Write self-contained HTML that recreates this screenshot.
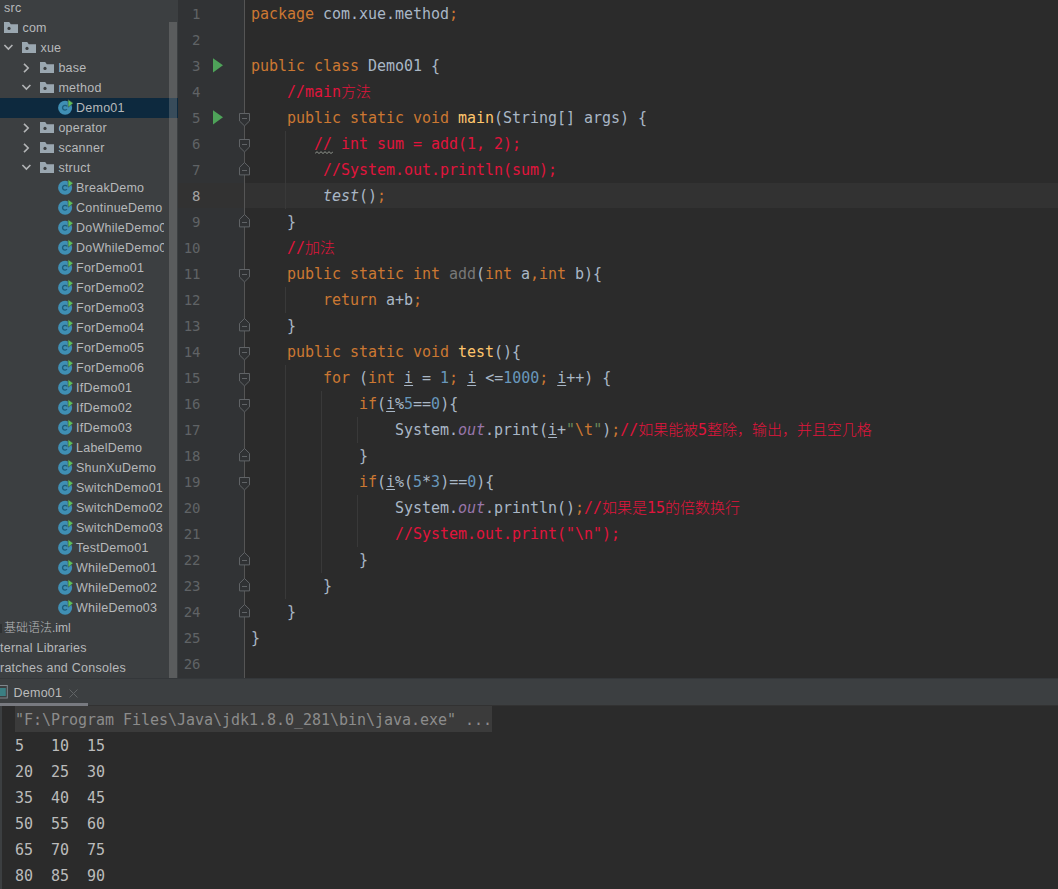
<!DOCTYPE html>
<html lang="zh"><head><meta charset="utf-8"><title>Demo01</title>
<style>
*{margin:0;padding:0;box-sizing:border-box}
html,body{width:1058px;height:889px;overflow:hidden;background:#2b2b2b}
body{position:relative;font-family:"Liberation Sans", "Noto Sans CJK SC", sans-serif;}
#proj{position:absolute;left:0;top:0;width:178px;height:678px;background:#3c3f41;overflow:hidden}
#sel{position:absolute;left:0;top:98px;width:178px;height:20px;background:#0d293e}
#tree{position:absolute;left:0;top:-2px;width:164px;height:680px;overflow:hidden}
.row{position:absolute;left:0;width:178px;height:20px;line-height:20px;font-size:12.5px;letter-spacing:0.25px;color:#b7b9bb;white-space:nowrap}
.row span.t{position:absolute;top:0}
.row svg{position:absolute}
#sb{position:absolute;left:169px;top:21.5px;width:8px;height:656.5px;background:rgba(170,170,170,0.28)}
#gut{position:absolute;left:178px;top:0;width:66px;height:678px;background:#313335}
#gsep{position:absolute;left:244px;top:0;width:1px;height:678px;background:#555555}
#ed{position:absolute;left:245px;top:0;width:813px;height:678px;background:#2b2b2b;overflow:hidden}
#cur{position:absolute;left:178px;top:183px;width:880px;height:25px;background:#323232}
.ln{position:absolute;left:176px;width:24.5px;text-align:right;height:26px;line-height:26.6px;font-family:"DejaVu Sans Mono", "Liberation Mono", "Noto Sans CJK SC", monospace;font-size:14px;color:#606366}
.ln.c{color:#a4a3a3}
.cl{position:absolute;left:251px;letter-spacing:-0.03px;height:26px;line-height:26px;font-family:"DejaVu Sans Mono", "Liberation Mono", "Noto Sans CJK SC", monospace;font-size:15px;color:#a9b7c6;white-space:pre}
.k{color:#cc7832}.c{color:#e0143c}.m{color:#ffc66d}.n{color:#6897bb}.s{color:#6a8759}.f{color:#9876aa;font-style:italic}.g{color:#787878}.i{font-style:italic}
.u{text-decoration:underline;text-underline-offset:2px}
.z{font-weight:300}
.ig{position:absolute;width:1px;background:#393939}
#tabs{position:absolute;left:0;top:678px;width:1058px;height:28px;background:#3c3f41}
#con{position:absolute;left:0;top:706px;width:1058px;height:183px;background:#2b2b2b;overflow:hidden}
.co{position:absolute;left:15px;letter-spacing:-0.03px;height:26px;line-height:26px;font-family:"DejaVu Sans Mono", "Liberation Mono", "Noto Sans CJK SC", monospace;font-size:15px;color:#bbbbbb;white-space:pre}
</style></head><body>
<div id="proj"><div id="sel"></div><div id="tree"><div class="row" style="top:0px"><span class="t" style="left:4px">src</span></div><div class="row" style="top:20px"><svg style="left:4px;top:4px" width="14" height="11" viewBox="0 0 14 11"><path d="M0 0h5.2l1.6 2.2H14V11H0z" fill="#9aa7b0"/><circle cx="5" cy="6.4" r="1.6" fill="#3c3f41"/></svg><span class="t" style="left:22.4px">com</span></div><div class="row" style="top:40px"><svg style="left:3px;top:5px" width="11" height="10" viewBox="0 0 11 10"><path d="M1.4 2 L5.4 6.1 L9.4 2" fill="none" stroke="#b2b4b6" stroke-width="1.6"/></svg><svg style="left:22px;top:4px" width="14" height="11" viewBox="0 0 14 11"><path d="M0 0h5.2l1.6 2.2H14V11H0z" fill="#9aa7b0"/><circle cx="5" cy="6.4" r="1.6" fill="#3c3f41"/></svg><span class="t" style="left:40.4px">xue</span></div><div class="row" style="top:60px"><svg style="left:21px;top:5px" width="11" height="10" viewBox="0 0 11 10"><path d="M3 0.9 L7.2 5 L3 9.1" fill="none" stroke="#b2b4b6" stroke-width="1.6"/></svg><svg style="left:40px;top:4px" width="14" height="11" viewBox="0 0 14 11"><path d="M0 0h5.2l1.6 2.2H14V11H0z" fill="#9aa7b0"/><circle cx="5" cy="6.4" r="1.6" fill="#3c3f41"/></svg><span class="t" style="left:58.4px">base</span></div><div class="row" style="top:80px"><svg style="left:21px;top:5px" width="11" height="10" viewBox="0 0 11 10"><path d="M1.4 2 L5.4 6.1 L9.4 2" fill="none" stroke="#b2b4b6" stroke-width="1.6"/></svg><svg style="left:40px;top:4px" width="14" height="11" viewBox="0 0 14 11"><path d="M0 0h5.2l1.6 2.2H14V11H0z" fill="#9aa7b0"/><circle cx="5" cy="6.4" r="1.6" fill="#3c3f41"/></svg><span class="t" style="left:58.4px">method</span></div><div class="row" style="top:100px"><svg style="left:57.6px;top:1.2px" width="16" height="16" viewBox="0 0 16 16"><circle cx="7.1" cy="8.8" r="7" fill="#408fb4"/><path d="M8.9 10.2a2.4 2.4 0 1 1 0-2.9" fill="none" stroke="#1d5d7b" stroke-width="1.4"/><path d="M10.1 0.4 L15.2 4.3 L10.1 8.2z" fill="#5fc05a" stroke="#3c3f41" stroke-width="0.5"/></svg><span class="t" style="left:76px">Demo01</span></div><div class="row" style="top:120px"><svg style="left:21px;top:5px" width="11" height="10" viewBox="0 0 11 10"><path d="M3 0.9 L7.2 5 L3 9.1" fill="none" stroke="#b2b4b6" stroke-width="1.6"/></svg><svg style="left:40px;top:4px" width="14" height="11" viewBox="0 0 14 11"><path d="M0 0h5.2l1.6 2.2H14V11H0z" fill="#9aa7b0"/><circle cx="5" cy="6.4" r="1.6" fill="#3c3f41"/></svg><span class="t" style="left:58.4px">operator</span></div><div class="row" style="top:140px"><svg style="left:21px;top:5px" width="11" height="10" viewBox="0 0 11 10"><path d="M3 0.9 L7.2 5 L3 9.1" fill="none" stroke="#b2b4b6" stroke-width="1.6"/></svg><svg style="left:40px;top:4px" width="14" height="11" viewBox="0 0 14 11"><path d="M0 0h5.2l1.6 2.2H14V11H0z" fill="#9aa7b0"/><circle cx="5" cy="6.4" r="1.6" fill="#3c3f41"/></svg><span class="t" style="left:58.4px">scanner</span></div><div class="row" style="top:160px"><svg style="left:21px;top:5px" width="11" height="10" viewBox="0 0 11 10"><path d="M1.4 2 L5.4 6.1 L9.4 2" fill="none" stroke="#b2b4b6" stroke-width="1.6"/></svg><svg style="left:40px;top:4px" width="14" height="11" viewBox="0 0 14 11"><path d="M0 0h5.2l1.6 2.2H14V11H0z" fill="#9aa7b0"/><circle cx="5" cy="6.4" r="1.6" fill="#3c3f41"/></svg><span class="t" style="left:58.4px">struct</span></div><div class="row" style="top:180px"><svg style="left:57.6px;top:1.2px" width="16" height="16" viewBox="0 0 16 16"><circle cx="7.1" cy="8.8" r="7" fill="#408fb4"/><path d="M8.9 10.2a2.4 2.4 0 1 1 0-2.9" fill="none" stroke="#1d5d7b" stroke-width="1.4"/><path d="M10.1 0.4 L15.2 4.3 L10.1 8.2z" fill="#5fc05a" stroke="#3c3f41" stroke-width="0.5"/></svg><span class="t" style="left:76px">BreakDemo</span></div><div class="row" style="top:200px"><svg style="left:57.6px;top:1.2px" width="16" height="16" viewBox="0 0 16 16"><circle cx="7.1" cy="8.8" r="7" fill="#408fb4"/><path d="M8.9 10.2a2.4 2.4 0 1 1 0-2.9" fill="none" stroke="#1d5d7b" stroke-width="1.4"/><path d="M10.1 0.4 L15.2 4.3 L10.1 8.2z" fill="#5fc05a" stroke="#3c3f41" stroke-width="0.5"/></svg><span class="t" style="left:76px">ContinueDemo</span></div><div class="row" style="top:220px"><svg style="left:57.6px;top:1.2px" width="16" height="16" viewBox="0 0 16 16"><circle cx="7.1" cy="8.8" r="7" fill="#408fb4"/><path d="M8.9 10.2a2.4 2.4 0 1 1 0-2.9" fill="none" stroke="#1d5d7b" stroke-width="1.4"/><path d="M10.1 0.4 L15.2 4.3 L10.1 8.2z" fill="#5fc05a" stroke="#3c3f41" stroke-width="0.5"/></svg><span class="t" style="left:76px">DoWhileDemo01</span></div><div class="row" style="top:240px"><svg style="left:57.6px;top:1.2px" width="16" height="16" viewBox="0 0 16 16"><circle cx="7.1" cy="8.8" r="7" fill="#408fb4"/><path d="M8.9 10.2a2.4 2.4 0 1 1 0-2.9" fill="none" stroke="#1d5d7b" stroke-width="1.4"/><path d="M10.1 0.4 L15.2 4.3 L10.1 8.2z" fill="#5fc05a" stroke="#3c3f41" stroke-width="0.5"/></svg><span class="t" style="left:76px">DoWhileDemo02</span></div><div class="row" style="top:260px"><svg style="left:57.6px;top:1.2px" width="16" height="16" viewBox="0 0 16 16"><circle cx="7.1" cy="8.8" r="7" fill="#408fb4"/><path d="M8.9 10.2a2.4 2.4 0 1 1 0-2.9" fill="none" stroke="#1d5d7b" stroke-width="1.4"/><path d="M10.1 0.4 L15.2 4.3 L10.1 8.2z" fill="#5fc05a" stroke="#3c3f41" stroke-width="0.5"/></svg><span class="t" style="left:76px">ForDemo01</span></div><div class="row" style="top:280px"><svg style="left:57.6px;top:1.2px" width="16" height="16" viewBox="0 0 16 16"><circle cx="7.1" cy="8.8" r="7" fill="#408fb4"/><path d="M8.9 10.2a2.4 2.4 0 1 1 0-2.9" fill="none" stroke="#1d5d7b" stroke-width="1.4"/><path d="M10.1 0.4 L15.2 4.3 L10.1 8.2z" fill="#5fc05a" stroke="#3c3f41" stroke-width="0.5"/></svg><span class="t" style="left:76px">ForDemo02</span></div><div class="row" style="top:300px"><svg style="left:57.6px;top:1.2px" width="16" height="16" viewBox="0 0 16 16"><circle cx="7.1" cy="8.8" r="7" fill="#408fb4"/><path d="M8.9 10.2a2.4 2.4 0 1 1 0-2.9" fill="none" stroke="#1d5d7b" stroke-width="1.4"/><path d="M10.1 0.4 L15.2 4.3 L10.1 8.2z" fill="#5fc05a" stroke="#3c3f41" stroke-width="0.5"/></svg><span class="t" style="left:76px">ForDemo03</span></div><div class="row" style="top:320px"><svg style="left:57.6px;top:1.2px" width="16" height="16" viewBox="0 0 16 16"><circle cx="7.1" cy="8.8" r="7" fill="#408fb4"/><path d="M8.9 10.2a2.4 2.4 0 1 1 0-2.9" fill="none" stroke="#1d5d7b" stroke-width="1.4"/><path d="M10.1 0.4 L15.2 4.3 L10.1 8.2z" fill="#5fc05a" stroke="#3c3f41" stroke-width="0.5"/></svg><span class="t" style="left:76px">ForDemo04</span></div><div class="row" style="top:340px"><svg style="left:57.6px;top:1.2px" width="16" height="16" viewBox="0 0 16 16"><circle cx="7.1" cy="8.8" r="7" fill="#408fb4"/><path d="M8.9 10.2a2.4 2.4 0 1 1 0-2.9" fill="none" stroke="#1d5d7b" stroke-width="1.4"/><path d="M10.1 0.4 L15.2 4.3 L10.1 8.2z" fill="#5fc05a" stroke="#3c3f41" stroke-width="0.5"/></svg><span class="t" style="left:76px">ForDemo05</span></div><div class="row" style="top:360px"><svg style="left:57.6px;top:1.2px" width="16" height="16" viewBox="0 0 16 16"><circle cx="7.1" cy="8.8" r="7" fill="#408fb4"/><path d="M8.9 10.2a2.4 2.4 0 1 1 0-2.9" fill="none" stroke="#1d5d7b" stroke-width="1.4"/><path d="M10.1 0.4 L15.2 4.3 L10.1 8.2z" fill="#5fc05a" stroke="#3c3f41" stroke-width="0.5"/></svg><span class="t" style="left:76px">ForDemo06</span></div><div class="row" style="top:380px"><svg style="left:57.6px;top:1.2px" width="16" height="16" viewBox="0 0 16 16"><circle cx="7.1" cy="8.8" r="7" fill="#408fb4"/><path d="M8.9 10.2a2.4 2.4 0 1 1 0-2.9" fill="none" stroke="#1d5d7b" stroke-width="1.4"/><path d="M10.1 0.4 L15.2 4.3 L10.1 8.2z" fill="#5fc05a" stroke="#3c3f41" stroke-width="0.5"/></svg><span class="t" style="left:76px">IfDemo01</span></div><div class="row" style="top:400px"><svg style="left:57.6px;top:1.2px" width="16" height="16" viewBox="0 0 16 16"><circle cx="7.1" cy="8.8" r="7" fill="#408fb4"/><path d="M8.9 10.2a2.4 2.4 0 1 1 0-2.9" fill="none" stroke="#1d5d7b" stroke-width="1.4"/><path d="M10.1 0.4 L15.2 4.3 L10.1 8.2z" fill="#5fc05a" stroke="#3c3f41" stroke-width="0.5"/></svg><span class="t" style="left:76px">IfDemo02</span></div><div class="row" style="top:420px"><svg style="left:57.6px;top:1.2px" width="16" height="16" viewBox="0 0 16 16"><circle cx="7.1" cy="8.8" r="7" fill="#408fb4"/><path d="M8.9 10.2a2.4 2.4 0 1 1 0-2.9" fill="none" stroke="#1d5d7b" stroke-width="1.4"/><path d="M10.1 0.4 L15.2 4.3 L10.1 8.2z" fill="#5fc05a" stroke="#3c3f41" stroke-width="0.5"/></svg><span class="t" style="left:76px">IfDemo03</span></div><div class="row" style="top:440px"><svg style="left:57.6px;top:1.2px" width="16" height="16" viewBox="0 0 16 16"><circle cx="7.1" cy="8.8" r="7" fill="#408fb4"/><path d="M8.9 10.2a2.4 2.4 0 1 1 0-2.9" fill="none" stroke="#1d5d7b" stroke-width="1.4"/><path d="M10.1 0.4 L15.2 4.3 L10.1 8.2z" fill="#5fc05a" stroke="#3c3f41" stroke-width="0.5"/></svg><span class="t" style="left:76px">LabelDemo</span></div><div class="row" style="top:460px"><svg style="left:57.6px;top:1.2px" width="16" height="16" viewBox="0 0 16 16"><circle cx="7.1" cy="8.8" r="7" fill="#408fb4"/><path d="M8.9 10.2a2.4 2.4 0 1 1 0-2.9" fill="none" stroke="#1d5d7b" stroke-width="1.4"/><path d="M10.1 0.4 L15.2 4.3 L10.1 8.2z" fill="#5fc05a" stroke="#3c3f41" stroke-width="0.5"/></svg><span class="t" style="left:76px">ShunXuDemo</span></div><div class="row" style="top:480px"><svg style="left:57.6px;top:1.2px" width="16" height="16" viewBox="0 0 16 16"><circle cx="7.1" cy="8.8" r="7" fill="#408fb4"/><path d="M8.9 10.2a2.4 2.4 0 1 1 0-2.9" fill="none" stroke="#1d5d7b" stroke-width="1.4"/><path d="M10.1 0.4 L15.2 4.3 L10.1 8.2z" fill="#5fc05a" stroke="#3c3f41" stroke-width="0.5"/></svg><span class="t" style="left:76px">SwitchDemo01</span></div><div class="row" style="top:500px"><svg style="left:57.6px;top:1.2px" width="16" height="16" viewBox="0 0 16 16"><circle cx="7.1" cy="8.8" r="7" fill="#408fb4"/><path d="M8.9 10.2a2.4 2.4 0 1 1 0-2.9" fill="none" stroke="#1d5d7b" stroke-width="1.4"/><path d="M10.1 0.4 L15.2 4.3 L10.1 8.2z" fill="#5fc05a" stroke="#3c3f41" stroke-width="0.5"/></svg><span class="t" style="left:76px">SwitchDemo02</span></div><div class="row" style="top:520px"><svg style="left:57.6px;top:1.2px" width="16" height="16" viewBox="0 0 16 16"><circle cx="7.1" cy="8.8" r="7" fill="#408fb4"/><path d="M8.9 10.2a2.4 2.4 0 1 1 0-2.9" fill="none" stroke="#1d5d7b" stroke-width="1.4"/><path d="M10.1 0.4 L15.2 4.3 L10.1 8.2z" fill="#5fc05a" stroke="#3c3f41" stroke-width="0.5"/></svg><span class="t" style="left:76px">SwitchDemo03</span></div><div class="row" style="top:540px"><svg style="left:57.6px;top:1.2px" width="16" height="16" viewBox="0 0 16 16"><circle cx="7.1" cy="8.8" r="7" fill="#408fb4"/><path d="M8.9 10.2a2.4 2.4 0 1 1 0-2.9" fill="none" stroke="#1d5d7b" stroke-width="1.4"/><path d="M10.1 0.4 L15.2 4.3 L10.1 8.2z" fill="#5fc05a" stroke="#3c3f41" stroke-width="0.5"/></svg><span class="t" style="left:76px">TestDemo01</span></div><div class="row" style="top:560px"><svg style="left:57.6px;top:1.2px" width="16" height="16" viewBox="0 0 16 16"><circle cx="7.1" cy="8.8" r="7" fill="#408fb4"/><path d="M8.9 10.2a2.4 2.4 0 1 1 0-2.9" fill="none" stroke="#1d5d7b" stroke-width="1.4"/><path d="M10.1 0.4 L15.2 4.3 L10.1 8.2z" fill="#5fc05a" stroke="#3c3f41" stroke-width="0.5"/></svg><span class="t" style="left:76px">WhileDemo01</span></div><div class="row" style="top:580px"><svg style="left:57.6px;top:1.2px" width="16" height="16" viewBox="0 0 16 16"><circle cx="7.1" cy="8.8" r="7" fill="#408fb4"/><path d="M8.9 10.2a2.4 2.4 0 1 1 0-2.9" fill="none" stroke="#1d5d7b" stroke-width="1.4"/><path d="M10.1 0.4 L15.2 4.3 L10.1 8.2z" fill="#5fc05a" stroke="#3c3f41" stroke-width="0.5"/></svg><span class="t" style="left:76px">WhileDemo02</span></div><div class="row" style="top:600px"><svg style="left:57.6px;top:1.2px" width="16" height="16" viewBox="0 0 16 16"><circle cx="7.1" cy="8.8" r="7" fill="#408fb4"/><path d="M8.9 10.2a2.4 2.4 0 1 1 0-2.9" fill="none" stroke="#1d5d7b" stroke-width="1.4"/><path d="M10.1 0.4 L15.2 4.3 L10.1 8.2z" fill="#5fc05a" stroke="#3c3f41" stroke-width="0.5"/></svg><span class="t" style="left:76px">WhileDemo03</span></div><div class="row" style="top:620px"><span class="t" style="left:4px;font-size:12px;letter-spacing:0"><span class="z">基础语法</span>.iml</span></div><div class="row" style="top:640px"><span class="t" style="left:0px">ternal Libraries</span></div><div class="row" style="top:660px"><span class="t" style="left:0px">ratches and Consoles</span></div></div><div id="sb"></div><div style="position:absolute;left:0;top:624px;width:1.5px;height:9px;background:#2f3234"></div></div>
<div id="gut"></div><div id="ed"></div><div id="cur"></div><div id="gsep"></div>
<div class="ig" style="left:285px;top:131px;height:78px"></div>
<div class="ig" style="left:285px;top:287px;height:26px"></div>
<div class="ig" style="left:285px;top:365px;height:234px"></div>
<div class="ig" style="left:321px;top:391px;height:182px"></div>
<div class="ig" style="left:357px;top:417px;height:26px"></div>
<div class="ig" style="left:357px;top:495px;height:52px"></div>
<div class="ln" style="top:1px">1</div><div class="ln" style="top:27px">2</div><div class="ln" style="top:53px">3</div><div class="ln" style="top:79px">4</div><div class="ln" style="top:105px">5</div><div class="ln" style="top:131px">6</div><div class="ln" style="top:157px">7</div><div class="ln c" style="top:183px">8</div><div class="ln" style="top:209px">9</div><div class="ln" style="top:235px">10</div><div class="ln" style="top:261px">11</div><div class="ln" style="top:287px">12</div><div class="ln" style="top:313px">13</div><div class="ln" style="top:339px">14</div><div class="ln" style="top:365px">15</div><div class="ln" style="top:391px">16</div><div class="ln" style="top:417px">17</div><div class="ln" style="top:443px">18</div><div class="ln" style="top:469px">19</div><div class="ln" style="top:495px">20</div><div class="ln" style="top:521px">21</div><div class="ln" style="top:547px">22</div><div class="ln" style="top:573px">23</div><div class="ln" style="top:599px">24</div><div class="ln" style="top:625px">25</div><div class="ln" style="top:651px">26</div>
<svg style="position:absolute;left:213px;top:57.6px" width="10" height="15" viewBox="0 0 10 15"><path d="M0 0.2 L10 7.3 L0 14.4z" fill="#4ea359"/></svg><svg style="position:absolute;left:213px;top:109.6px" width="10" height="15" viewBox="0 0 10 15"><path d="M0 0.2 L10 7.3 L0 14.4z" fill="#4ea359"/></svg>
<svg style="position:absolute;left:239px;top:113px" width="11" height="14" viewBox="0 0 11 14"><path d="M0.5 0.5 H10.5 V8 L5.5 12.9 L0.5 8 Z" fill="#2f3133" stroke="#606366" stroke-width="1"/><path d="M3 5.5 H8" stroke="#606366" stroke-width="1"/></svg><svg style="position:absolute;left:239px;top:139px" width="11" height="14" viewBox="0 0 11 14"><path d="M0.5 0.5 H10.5 V8 L5.5 12.9 L0.5 8 Z" fill="#2f3133" stroke="#606366" stroke-width="1"/><path d="M3 5.5 H8" stroke="#606366" stroke-width="1"/></svg><svg style="position:absolute;left:239px;top:162px" width="11" height="14" viewBox="0 0 11 14"><path d="M0.5 12.9 H10.5 V5.4 L5.5 0.5 L0.5 5.4 Z" fill="#2f3133" stroke="#606366" stroke-width="1"/><path d="M3 8.5 H8" stroke="#606366" stroke-width="1"/></svg><svg style="position:absolute;left:239px;top:214px" width="11" height="14" viewBox="0 0 11 14"><path d="M0.5 12.9 H10.5 V5.4 L5.5 0.5 L0.5 5.4 Z" fill="#2f3133" stroke="#606366" stroke-width="1"/><path d="M3 8.5 H8" stroke="#606366" stroke-width="1"/></svg><svg style="position:absolute;left:239px;top:269px" width="11" height="14" viewBox="0 0 11 14"><path d="M0.5 0.5 H10.5 V8 L5.5 12.9 L0.5 8 Z" fill="#2f3133" stroke="#606366" stroke-width="1"/><path d="M3 5.5 H8" stroke="#606366" stroke-width="1"/></svg><svg style="position:absolute;left:239px;top:318px" width="11" height="14" viewBox="0 0 11 14"><path d="M0.5 12.9 H10.5 V5.4 L5.5 0.5 L0.5 5.4 Z" fill="#2f3133" stroke="#606366" stroke-width="1"/><path d="M3 8.5 H8" stroke="#606366" stroke-width="1"/></svg><svg style="position:absolute;left:239px;top:347px" width="11" height="14" viewBox="0 0 11 14"><path d="M0.5 0.5 H10.5 V8 L5.5 12.9 L0.5 8 Z" fill="#2f3133" stroke="#606366" stroke-width="1"/><path d="M3 5.5 H8" stroke="#606366" stroke-width="1"/></svg><svg style="position:absolute;left:239px;top:373px" width="11" height="14" viewBox="0 0 11 14"><path d="M0.5 0.5 H10.5 V8 L5.5 12.9 L0.5 8 Z" fill="#2f3133" stroke="#606366" stroke-width="1"/><path d="M3 5.5 H8" stroke="#606366" stroke-width="1"/></svg><svg style="position:absolute;left:239px;top:399px" width="11" height="14" viewBox="0 0 11 14"><path d="M0.5 0.5 H10.5 V8 L5.5 12.9 L0.5 8 Z" fill="#2f3133" stroke="#606366" stroke-width="1"/><path d="M3 5.5 H8" stroke="#606366" stroke-width="1"/></svg><svg style="position:absolute;left:239px;top:448px" width="11" height="14" viewBox="0 0 11 14"><path d="M0.5 12.9 H10.5 V5.4 L5.5 0.5 L0.5 5.4 Z" fill="#2f3133" stroke="#606366" stroke-width="1"/><path d="M3 8.5 H8" stroke="#606366" stroke-width="1"/></svg><svg style="position:absolute;left:239px;top:477px" width="11" height="14" viewBox="0 0 11 14"><path d="M0.5 0.5 H10.5 V8 L5.5 12.9 L0.5 8 Z" fill="#2f3133" stroke="#606366" stroke-width="1"/><path d="M3 5.5 H8" stroke="#606366" stroke-width="1"/></svg><svg style="position:absolute;left:239px;top:552px" width="11" height="14" viewBox="0 0 11 14"><path d="M0.5 12.9 H10.5 V5.4 L5.5 0.5 L0.5 5.4 Z" fill="#2f3133" stroke="#606366" stroke-width="1"/><path d="M3 8.5 H8" stroke="#606366" stroke-width="1"/></svg><svg style="position:absolute;left:239px;top:578px" width="11" height="14" viewBox="0 0 11 14"><path d="M0.5 12.9 H10.5 V5.4 L5.5 0.5 L0.5 5.4 Z" fill="#2f3133" stroke="#606366" stroke-width="1"/><path d="M3 8.5 H8" stroke="#606366" stroke-width="1"/></svg><svg style="position:absolute;left:239px;top:604px" width="11" height="14" viewBox="0 0 11 14"><path d="M0.5 12.9 H10.5 V5.4 L5.5 0.5 L0.5 5.4 Z" fill="#2f3133" stroke="#606366" stroke-width="1"/><path d="M3 8.5 H8" stroke="#606366" stroke-width="1"/></svg>
<div class="cl" style="top:1px"><span class="k">package </span>com.xue.method<span class="k">;</span></div><div class="cl" style="top:53px"><span class="k">public class </span>Demo01 {</div><div class="cl" style="top:79px">    <span class="c">//main<span class="z">方法</span></span></div><div class="cl" style="top:105px">    <span class="k">public static void </span><span class="m">main</span>(String[] args) {</div><div class="cl" style="top:131px">       <span class="c">// int sum = add(1, 2);</span></div><div class="cl" style="top:157px">        <span class="c">//System.out.println(sum);</span></div><div class="cl" style="top:183px">        <span class="i">test</span>()<span class="k">;</span></div><div class="cl" style="top:209px">    }</div><div class="cl" style="top:235px">    <span class="c">//<span class="z">加法</span></span></div><div class="cl" style="top:261px">    <span class="k">public static int </span><span class="g">add</span>(<span class="k">int </span>a<span class="k">,int </span>b){</div><div class="cl" style="top:287px">        <span class="k">return </span>a+b<span class="k">;</span></div><div class="cl" style="top:313px">    }</div><div class="cl" style="top:339px">    <span class="k">public static void </span><span class="m">test</span>(){</div><div class="cl" style="top:365px">        <span class="k">for </span>(<span class="k">int </span><span class="u">i</span> = <span class="n">1</span><span class="k">; </span><span class="u">i</span> &lt;=<span class="n">1000</span><span class="k">; </span><span class="u">i</span>++) {</div><div class="cl" style="top:391px">            <span class="k">if</span>(<span class="u">i</span>%<span class="n">5</span>==<span class="n">0</span>){</div><div class="cl" style="top:417px">                System.<span class="f">out</span>.print(<span class="u">i</span>+<span class="s">&quot;</span><span class="k">\t</span><span class="s">&quot;</span>)<span class="k">;</span><span class="c">//<span class="z">如果能被</span>5<span class="z">整除，输出，并且空几格</span></span></div><div class="cl" style="top:443px">            }</div><div class="cl" style="top:469px">            <span class="k">if</span>(<span class="u">i</span>%(<span class="n">5</span>*<span class="n">3</span>)==<span class="n">0</span>){</div><div class="cl" style="top:495px">                System.<span class="f">out</span>.println()<span class="k">;</span><span class="c">//<span class="z">如果是</span>15<span class="z">的倍数换行</span></span></div><div class="cl" style="top:521px">                <span class="c">//System.out.print(&quot;\n&quot;);</span></div><div class="cl" style="top:547px">            }</div><div class="cl" style="top:573px">        }</div><div class="cl" style="top:599px">    }</div><div class="cl" style="top:625px">}</div>
<svg style="position:absolute;left:314.5px;top:151px" width="18" height="4" viewBox="0 0 18 4"><path d="M0 2.6 L2 0.6 L4 2.6 L6 0.6 L8 2.6 L10 0.6 L12 2.6 L14 0.6 L16 2.6 L18 0.6" fill="none" stroke="#a3a89f" stroke-width="0.9"/></svg>
<div id="tabs">
<div style="position:absolute;left:0;top:0;width:1058px;height:1px;background:#34373a"></div>
<div style="position:absolute;left:0;top:27px;width:1058px;height:1px;background:#323232"></div>
<svg style="position:absolute;left:0;top:7px" width="9" height="14" viewBox="0 0 9 14"><rect x="-6" y="0.5" width="13.3" height="12.5" fill="none" stroke="#80878c" stroke-width="1"/><rect x="-6" y="3" width="11.8" height="8" fill="#3b7f83"/></svg>
<span style="position:absolute;left:13.5px;top:5px;font-size:12.5px;letter-spacing:0.25px;line-height:20px;color:#bbbbbb">Demo01</span>
<svg style="position:absolute;left:69.4px;top:10.7px" width="9" height="9" viewBox="0 0 9 9"><path d="M0.5 0.5L8.5 8.5M8.5 0.5L0.5 8.5" stroke="#616466" stroke-width="1"/></svg>
<div style="position:absolute;left:0;top:24.8px;width:88px;height:3.4px;background:#787a80"></div>
</div>
<div id="con">
<div style="position:absolute;left:0;top:0;width:1.5px;height:183px;background:#3c3f41"></div>
<div style="position:absolute;left:14.5px;top:0;width:477.5px;height:26px;background:#3b3b3b"></div>
<div class="co" style="top:1px;color:#8c8c8c">&quot;F:\Program Files\Java\jdk1.8.0_281\bin\java.exe&quot; ...</div><div class="co" style="top:27px;color:#bbbbbb">5   10  15</div><div class="co" style="top:53px;color:#bbbbbb">20  25  30</div><div class="co" style="top:79px;color:#bbbbbb">35  40  45</div><div class="co" style="top:105px;color:#bbbbbb">50  55  60</div><div class="co" style="top:131px;color:#bbbbbb">65  70  75</div><div class="co" style="top:157px;color:#bbbbbb">80  85  90</div>
</div>

</body></html>
